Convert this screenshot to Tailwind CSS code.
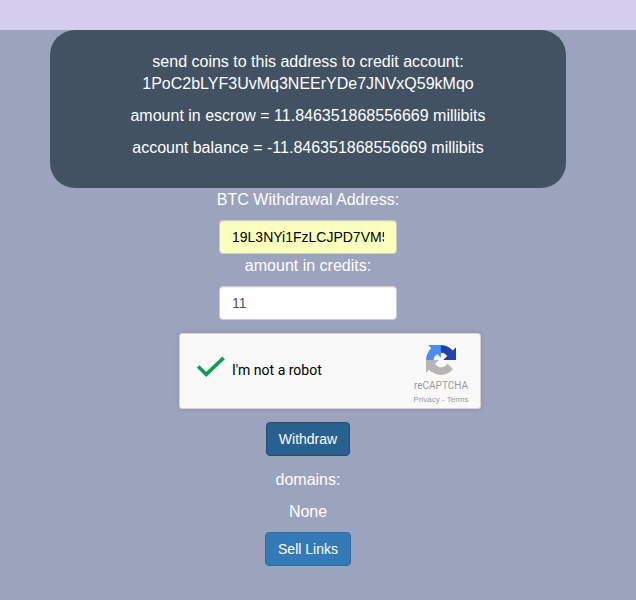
<!DOCTYPE html>
<html lang="en">
<head>
<meta charset="utf-8">
<title>Account</title>
<script src="https://cdn.jsdelivr.net/npm/@tailwindcss/browser@4"></script>
</head>
<body class="min-h-screen bg-[#9ca3bd] font-['Liberation_Sans',Arial,sans-serif] text-base leading-[22px] text-white">
<header class="h-[30px] bg-[#d5cdee]"></header>
<main class="flex w-[616px] flex-col items-center text-center">
  <section class="h-[158px] w-[516px] rounded-[25px] bg-[#425262] px-5 pt-[21px]">
    <p class="mb-2.5">send coins to this address to credit account:<br>1PoC2bLYF3UvMq3NEErYDe7JNVxQ59kMqo</p>
    <p class="mb-2.5">amount in escrow = 11.846351868556669 millibits</p>
    <p>account balance = -11.846351868556669 millibits</p>
  </section>
  <form class="flex flex-col items-center">
    <label for="address" class="mb-[9px] pt-px">BTC Withdrawal Address:</label>
    <input id="address" type="text" value="19L3NYi1FzLCJPD7VM5" class="h-[34px] w-[178px] rounded border border-[#ccc] bg-[#faffbd] px-3 py-1.5 text-sm text-black shadow-[inset_0_1px_1px_rgba(0,0,0,0.075)]">
    <label for="amount" class="mb-[9px] pt-px">amount in credits:</label>
    <input id="amount" type="text" value="11" class="h-[34px] w-[178px] rounded border border-[#ccc] bg-white px-3 py-1.5 text-sm text-[#555] shadow-[inset_0_1px_1px_rgba(0,0,0,0.075)]">
    <div class="my-[13px] ml-11 flex h-[76px] w-[302px] rounded-[3px] border border-[#d3d3d3] bg-[#f9f9f9] shadow-[0_0_4px_1px_rgba(0,0,0,0.08)] font-[Roboto,sans-serif]">
      <div class="flex flex-1 items-center pl-[17px]">
        <svg class="mt-[-8px] h-[22px] w-[29px]" viewBox="0 0 29 22" fill="none" stroke="#0f9d58" stroke-width="3.6"><path d="M1.2 10.4 9.2 18.4 26.6 1.9"/></svg>
        <span class="ml-[6px] mt-[-2px] text-sm leading-[17px] text-black">I'm not a robot</span>
      </div>
      <div class="mr-[11px] flex w-[56px] flex-col items-center pt-[11px] text-[#9b9b9b]">
        <svg class="h-[30px] w-[30px]" viewBox="0 0 64 64"><path fill="#2341a9" d="M64 31.955l-.033-1.37V4.687l-7.16 7.16C50.948 4.674 42.033.093 32.05.093c-10.4 0-19.622 4.96-25.458 12.64l11.736 11.86a15.55 15.55 0 0 1 4.754-5.334c2.05-1.6 4.952-2.906 8.968-2.906.485 0 .86.057 1.135.163 4.976.393 9.288 3.14 11.828 7.124l-8.307 8.307L64 31.953"/><path fill="#4a8df6" d="M31.862.094l-1.37.033H4.594l7.16 7.16C4.58 13.147 0 22.06 0 32.046c0 10.4 4.96 19.622 12.64 25.458L24.5 45.768a15.55 15.55 0 0 1-5.334-4.754c-1.6-2.05-2.906-4.952-2.906-8.968 0-.485.057-.86.163-1.135.393-4.976 3.14-9.288 7.124-11.828l8.307 8.307L31.86.095"/><path fill="#b5b5b5" d="M.001 32.045l.033 1.37v25.898l7.16-7.16c5.86 7.173 14.774 11.754 24.76 11.754 10.4 0 19.622-4.96 25.458-12.64l-11.736-11.86a15.55 15.55 0 0 1-4.754 5.334c-2.05 1.6-4.952 2.906-8.968 2.906-.485 0-.86-.057-1.135-.163-4.976-.393-9.288-3.14-11.828-7.124l8.307-8.307c-10.522.04-22.4.066-27.295-.005"/></svg>
        <span class="mt-[6px] text-[10px] leading-[10px]">reCAPTCHA</span>
        <span class="mt-[4px] whitespace-nowrap font-['Liberation_Sans',Arial,sans-serif] text-[8px] leading-[10px]">Privacy - Terms</span>
      </div>
    </div>
    <button type="button" class="h-[34px] w-[84px] rounded border border-[#204d74] bg-[#286090] text-sm">Withdraw</button>
  </form>
  <p class="mt-[13px]">domains:</p>
  <p class="mt-2.5 mb-[9px]">None</p>
  <button type="button" class="h-[34px] w-[86px] rounded border border-[#2e6da4] bg-[#337ab7] text-sm">Sell Links</button>
</main>
</body>
</html>
